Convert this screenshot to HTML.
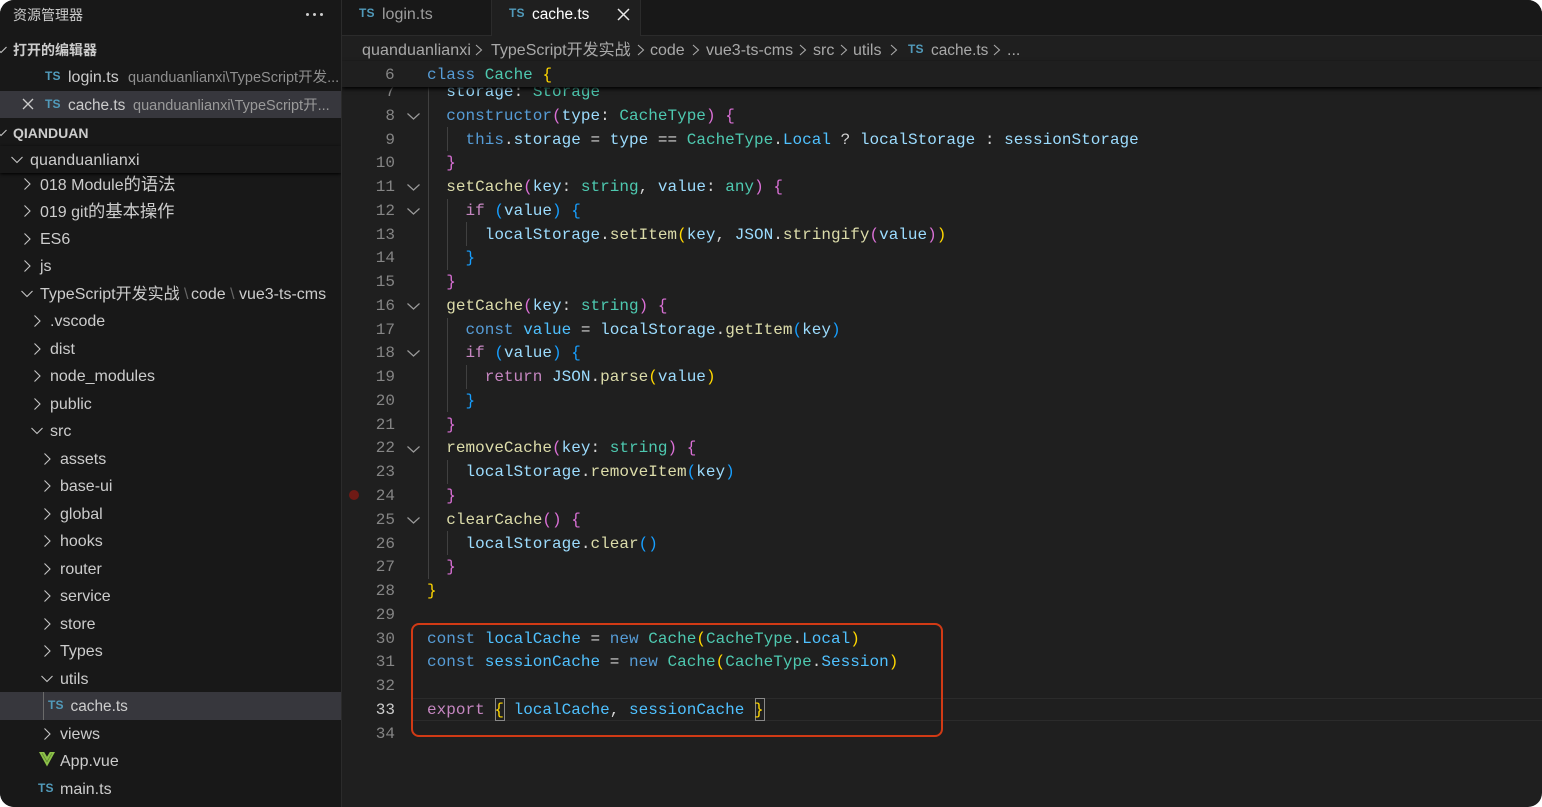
<!DOCTYPE html>
<html><head><meta charset="utf-8"><style>
*{box-sizing:border-box}
html,body{margin:0;padding:0;width:1542px;height:807px;overflow:hidden;background:#fff}
#w{position:absolute;left:0;top:0;width:1542px;height:807px;background:#1f1f1f;border-radius:14px;overflow:hidden;font-family:"Liberation Sans","Noto Sans CJK SC",sans-serif;color:#ccc}
.a{position:absolute;white-space:pre}
#side{position:absolute;left:0;top:0;width:341px;height:807px;background:#181818;overflow:hidden;font-size:16px}
#side .a{line-height:20px}
#tree{position:absolute;left:0;top:169.5px;width:341px}
.r{position:relative;height:27.5px;line-height:27.5px;white-space:pre}
.r span.t{position:absolute;top:1px}
.z{font-size:17.3px}
svg.c{position:absolute;width:12px;height:12px;fill:none;stroke:#c5c5c5;stroke-width:1.1}
.ts{position:absolute;font-weight:bold;font-size:12px;color:#519aba;line-height:14px;letter-spacing:.2px}
#tabs{position:absolute;left:342px;top:0;width:1200px;height:36px;background:#181818;border-bottom:1px solid #2b2b2b}
#gut,#code{position:absolute;font-family:"Liberation Mono",monospace;font-size:16px;line-height:23.76px;white-space:pre}
#gut{left:342px;top:81px;width:53px;text-align:right;color:#858585;letter-spacing:.015px}
#code{left:427px;top:81px;letter-spacing:.015px;color:#ccc}
.k{color:#569cd6}.n{color:#4ec9b0}.v{color:#9cdcfe}.f{color:#dcdcaa}.g{color:#ffd700}.p{color:#da70d6}.b{color:#179fff}.x{color:#c586c0}.o{color:#d4d4d4}.q{color:#4fc1ff}
.i{position:absolute;width:1px;background:#404040}
svg.fd{position:absolute;left:407px;width:13px;height:12px;fill:none;stroke:#9a9a9a;stroke-width:1.2}
</style></head><body><div id="w">

<div id="tabs"></div>
<div class="a" style="left:342px;top:0;width:150px;height:35px;background:#181818"></div>
<div class="a" style="left:491px;top:0;width:1px;height:36px;background:#2b2b2b"></div>
<div class="a" style="left:492px;top:0;width:149px;height:36px;background:#1f1f1f;border-right:1px solid #2b2b2b"></div>
<span class="ts" style="left:359px;top:6px">TS</span>
<span class="a" style="left:382px;top:5px;font-size:16px;line-height:20px;color:#9d9d9d">login.ts</span>
<span class="ts" style="left:509px;top:6px">TS</span>
<span class="a" style="left:532px;top:5px;font-size:15.4px;line-height:20px;color:#fff">cache.ts</span>
<svg class="a" style="left:617px;top:8px" width="13" height="13" fill="none" stroke="#e8e8e8" stroke-width="1.5"><path d="M1 1L12 12M12 1L1 12"/></svg>

<!-- breadcrumb -->
<div style="position:absolute;left:342px;top:41px;height:20px;font-size:16px;line-height:20px;color:#a9a9a9">
<span class="a" style="left:20px;letter-spacing:.1px">quanduanlianxi</span>
<svg class="a" style="left:133px;top:3px" width="8" height="12" fill="none" stroke="#a9a9a9" stroke-width="1.1"><path d="M1 1L6.5 6L1 11"/></svg>
<span class="a" style="left:149px">TypeScript开发实战</span>
<svg class="a" style="left:295px;top:3px" width="8" height="12" fill="none" stroke="#a9a9a9" stroke-width="1.1"><path d="M1 1L6.5 6L1 11"/></svg>
<span class="a" style="left:308px">code</span>
<svg class="a" style="left:350px;top:3px" width="8" height="12" fill="none" stroke="#a9a9a9" stroke-width="1.1"><path d="M1 1L6.5 6L1 11"/></svg>
<span class="a" style="left:364px">vue3-ts-cms</span>
<svg class="a" style="left:457px;top:3px" width="8" height="12" fill="none" stroke="#a9a9a9" stroke-width="1.1"><path d="M1 1L6.5 6L1 11"/></svg>
<span class="a" style="left:471px">src</span>
<svg class="a" style="left:498px;top:3px" width="8" height="12" fill="none" stroke="#a9a9a9" stroke-width="1.1"><path d="M1 1L6.5 6L1 11"/></svg>
<span class="a" style="left:511px">utils</span>
<svg class="a" style="left:548px;top:3px" width="8" height="12" fill="none" stroke="#a9a9a9" stroke-width="1.1"><path d="M1 1L6.5 6L1 11"/></svg>
<span class="ts" style="left:566px;top:1px">TS</span>
<span class="a" style="left:589px;font-size:15.4px">cache.ts</span>
<svg class="a" style="left:651px;top:3px" width="8" height="12" fill="none" stroke="#a9a9a9" stroke-width="1.1"><path d="M1 1L6.5 6L1 11"/></svg>
<span class="a" style="left:665px">...</span>
</div>

<!-- editor -->
<div class="a" style="left:413px;top:698px;width:1129px;height:23px;border-top:1px solid #2b2b2b;border-bottom:1px solid #2b2b2b"></div>
<div class="i" style="left:428px;top:87px;height:492px"></div>
<div class="i" style="left:447px;top:127px;height:24px"></div>
<div class="i" style="left:447px;top:199px;height:71px"></div>
<div class="i" style="left:447px;top:318px;height:94px"></div>
<div class="i" style="left:447px;top:460px;height:24px"></div>
<div class="i" style="left:447px;top:531px;height:24px"></div>
<div class="i" style="left:466px;top:222px;height:24px"></div>
<div class="i" style="left:466px;top:365px;height:24px"></div>
<div class="a" style="left:495px;top:698px;width:10px;height:23px;border:1px solid #888"></div>
<div class="a" style="left:755px;top:698px;width:10px;height:23px;border:1px solid #888"></div>

<div id="gut">7
8
9
10
11
12
13
14
15
16
17
18
19
20
21
22
23
24
25
26
27
28
29
30
31
32
<span style="color:#ccc">33</span>
34</div>

<div id="code">  <span class="v">storage</span><span class="o">:</span> <span class="n">Storage</span>
  <span class="k">constructor</span><span class="p">(</span><span class="v">type</span><span class="o">:</span> <span class="n">CacheType</span><span class="p">)</span> <span class="p">{</span>
    <span class="k">this</span><span class="o">.</span><span class="v">storage</span> <span class="o">=</span> <span class="v">type</span> <span class="o">==</span> <span class="n">CacheType</span><span class="o">.</span><span class="q">Local</span> <span class="o">?</span> <span class="v">localStorage</span> <span class="o">:</span> <span class="v">sessionStorage</span>
  <span class="p">}</span>
  <span class="f">setCache</span><span class="p">(</span><span class="v">key</span><span class="o">:</span> <span class="n">string</span><span class="o">,</span> <span class="v">value</span><span class="o">:</span> <span class="n">any</span><span class="p">)</span> <span class="p">{</span>
    <span class="x">if</span> <span class="b">(</span><span class="v">value</span><span class="b">)</span> <span class="b">{</span>
      <span class="v">localStorage</span><span class="o">.</span><span class="f">setItem</span><span class="g">(</span><span class="v">key</span><span class="o">,</span> <span class="v">JSON</span><span class="o">.</span><span class="f">stringify</span><span class="p">(</span><span class="v">value</span><span class="p">)</span><span class="g">)</span>
    <span class="b">}</span>
  <span class="p">}</span>
  <span class="f">getCache</span><span class="p">(</span><span class="v">key</span><span class="o">:</span> <span class="n">string</span><span class="p">)</span> <span class="p">{</span>
    <span class="k">const</span> <span class="q">value</span> <span class="o">=</span> <span class="v">localStorage</span><span class="o">.</span><span class="f">getItem</span><span class="b">(</span><span class="v">key</span><span class="b">)</span>
    <span class="x">if</span> <span class="b">(</span><span class="v">value</span><span class="b">)</span> <span class="b">{</span>
      <span class="x">return</span> <span class="v">JSON</span><span class="o">.</span><span class="f">parse</span><span class="g">(</span><span class="v">value</span><span class="g">)</span>
    <span class="b">}</span>
  <span class="p">}</span>
  <span class="f">removeCache</span><span class="p">(</span><span class="v">key</span><span class="o">:</span> <span class="n">string</span><span class="p">)</span> <span class="p">{</span>
    <span class="v">localStorage</span><span class="o">.</span><span class="f">removeItem</span><span class="b">(</span><span class="v">key</span><span class="b">)</span>
  <span class="p">}</span>
  <span class="f">clearCache</span><span class="p">()</span> <span class="p">{</span>
    <span class="v">localStorage</span><span class="o">.</span><span class="f">clear</span><span class="b">()</span>
  <span class="p">}</span>
<span class="g">}</span>

<span class="k">const</span> <span class="q">localCache</span> <span class="o">=</span> <span class="k">new</span> <span class="n">Cache</span><span class="g">(</span><span class="n">CacheType</span><span class="o">.</span><span class="q">Local</span><span class="g">)</span>
<span class="k">const</span> <span class="q">sessionCache</span> <span class="o">=</span> <span class="k">new</span> <span class="n">Cache</span><span class="g">(</span><span class="n">CacheType</span><span class="o">.</span><span class="q">Session</span><span class="g">)</span>

<span class="x">export</span> <span class="g">{</span> <span class="q">localCache</span><span class="o">,</span> <span class="q">sessionCache</span> <span class="g">}</span>
</div>

<svg class="fd" style="top:110px"><path d="M.5 3.5L6.5 9L12.5 3.5"/></svg>
<svg class="fd" style="top:181px"><path d="M.5 3.5L6.5 9L12.5 3.5"/></svg>
<svg class="fd" style="top:205px"><path d="M.5 3.5L6.5 9L12.5 3.5"/></svg>
<svg class="fd" style="top:300px"><path d="M.5 3.5L6.5 9L12.5 3.5"/></svg>
<svg class="fd" style="top:347px"><path d="M.5 3.5L6.5 9L12.5 3.5"/></svg>
<svg class="fd" style="top:443px"><path d="M.5 3.5L6.5 9L12.5 3.5"/></svg>
<svg class="fd" style="top:514px"><path d="M.5 3.5L6.5 9L12.5 3.5"/></svg>
<div class="a" style="left:349px;top:490px;width:10px;height:10px;border-radius:50%;background:#6f1a15"></div>

<!-- sticky scroll -->
<div class="a" style="left:342px;top:61px;width:1200px;height:26px;background:#1f1f1f;box-shadow:0 2px 4px #000;font-family:'Liberation Mono',monospace;font-size:16px;line-height:27px;letter-spacing:.015px"><span class="a" style="left:43px;color:#858585;top:.5px">6</span><span class="a" style="left:85px;top:.5px"><span class="k">class</span> <span class="n">Cache</span> <span class="g">{</span></span></div>

<!-- red box -->
<div class="a" style="left:411px;top:623px;width:532px;height:114px;border:2px solid #d13a15;border-radius:8px"></div>

<!-- sidebar -->
<div id="side">
<div class="a" style="left:13px;top:5px;font-size:14px">资源管理器</div>
<div class="a" style="left:306px;top:12.5px;width:3px;height:3px;background:#ccc;border-radius:50%"></div>
<div class="a" style="left:313px;top:12.5px;width:3px;height:3px;background:#ccc;border-radius:50%"></div>
<div class="a" style="left:320px;top:12.5px;width:3px;height:3px;background:#ccc;border-radius:50%"></div>

<svg class="c" style="left:-5px;top:44px"><path d="M.5 3L6 8.5L11.5 3"/></svg>
<div class="a" style="left:13px;top:40px;font-size:14px;font-weight:bold">打开的编辑器</div>
<span class="ts" style="left:45px;top:69px">TS</span>
<div class="a" style="left:68px;top:68px">login.ts</div>
<div class="a" style="left:128px;top:68px;font-size:14.5px;color:#8f8f8f">quanduanlianxi\TypeScript开发...</div>

<div class="a" style="left:0;top:91px;width:341px;height:27px;background:#37373d"></div>
<svg class="a" style="left:22px;top:98px" width="12" height="12" fill="none" stroke="#ccc" stroke-width="1.3"><path d="M1 1L11 11M11 1L1 11"/></svg>
<span class="ts" style="left:45px;top:97px">TS</span>
<div class="a" style="left:68px;top:96px;font-size:15.4px">cache.ts</div>
<div class="a" style="left:133px;top:96px;font-size:14.5px;color:#9a9a9a">quanduanlianxi\TypeScript开...</div>

<svg class="c" style="left:-5px;top:127px"><path d="M.5 3L6 8.5L11.5 3"/></svg>
<div class="a" style="left:13px;top:123px;font-size:14px;font-weight:bold">QIANDUAN</div>

<div id="tree">
<div class="r"><svg class="c" style="left:22px;top:8px"><path d="M2.5 .5L8 6L2.5 11.5"/></svg><span class="t" style="left:40px">018 Module<span class="z">的语法</span></span></div>
<div class="r"><svg class="c" style="left:22px;top:8px"><path d="M2.5 .5L8 6L2.5 11.5"/></svg><span class="t" style="left:40px">019 git<span class="z">的基本操作</span></span></div>
<div class="r"><svg class="c" style="left:22px;top:8px"><path d="M2.5 .5L8 6L2.5 11.5"/></svg><span class="t" style="left:40px">ES6</span></div>
<div class="r"><svg class="c" style="left:22px;top:8px"><path d="M2.5 .5L8 6L2.5 11.5"/></svg><span class="t" style="left:40px">js</span></div>
<div class="r"><svg class="c" style="left:21px;top:8px"><path d="M.5 3L6 8.5L11.5 3"/></svg><span class="t" style="left:40px">TypeScript开发实战<span style="color:#666"> \ </span><span style="margin-left:-2px">code</span><span style="color:#666"> \ </span>vue3-ts-cms</span></div>
<div class="r"><svg class="c" style="left:32px;top:8px"><path d="M2.5 .5L8 6L2.5 11.5"/></svg><span class="t" style="left:50px">.vscode</span></div>
<div class="r"><svg class="c" style="left:32px;top:8px"><path d="M2.5 .5L8 6L2.5 11.5"/></svg><span class="t" style="left:50px">dist</span></div>
<div class="r"><svg class="c" style="left:32px;top:8px"><path d="M2.5 .5L8 6L2.5 11.5"/></svg><span class="t" style="left:50px">node_modules</span></div>
<div class="r"><svg class="c" style="left:32px;top:8px"><path d="M2.5 .5L8 6L2.5 11.5"/></svg><span class="t" style="left:50px">public</span></div>
<div class="r"><svg class="c" style="left:31px;top:8px"><path d="M.5 3L6 8.5L11.5 3"/></svg><span class="t" style="left:50px">src</span></div>
<div class="r"><svg class="c" style="left:42px;top:8px"><path d="M2.5 .5L8 6L2.5 11.5"/></svg><span class="t" style="left:60px">assets</span></div>
<div class="r"><svg class="c" style="left:42px;top:8px"><path d="M2.5 .5L8 6L2.5 11.5"/></svg><span class="t" style="left:60px">base-ui</span></div>
<div class="r"><svg class="c" style="left:42px;top:8px"><path d="M2.5 .5L8 6L2.5 11.5"/></svg><span class="t" style="left:60px">global</span></div>
<div class="r"><svg class="c" style="left:42px;top:8px"><path d="M2.5 .5L8 6L2.5 11.5"/></svg><span class="t" style="left:60px">hooks</span></div>
<div class="r"><svg class="c" style="left:42px;top:8px"><path d="M2.5 .5L8 6L2.5 11.5"/></svg><span class="t" style="left:60px">router</span></div>
<div class="r"><svg class="c" style="left:42px;top:8px"><path d="M2.5 .5L8 6L2.5 11.5"/></svg><span class="t" style="left:60px">service</span></div>
<div class="r"><svg class="c" style="left:42px;top:8px"><path d="M2.5 .5L8 6L2.5 11.5"/></svg><span class="t" style="left:60px">store</span></div>
<div class="r"><svg class="c" style="left:42px;top:8px"><path d="M2.5 .5L8 6L2.5 11.5"/></svg><span class="t" style="left:60px">Types</span></div>
<div class="r"><svg class="c" style="left:41px;top:8px"><path d="M.5 3L6 8.5L11.5 3"/></svg><span class="t" style="left:60px">utils</span></div>
<div class="r" style="background:#37373d"><div style="position:absolute;left:43px;top:0;width:1px;height:27.5px;background:#6a6a6a"></div><span class="ts" style="left:48px;top:6px">TS</span><span class="t" style="left:70.5px;font-size:15.4px">cache.ts</span></div>
<div class="r"><svg class="c" style="left:42px;top:8px"><path d="M2.5 .5L8 6L2.5 11.5"/></svg><span class="t" style="left:60px">views</span></div>
<div class="r"><svg style="position:absolute;left:39px;top:5px" width="16" height="15"><path d="M0 0H5.2L8 4.8L10.8 0H16L8 14.5Z" fill="#8dc149"/><path d="M3.2 1.5L8 9.8L12.8 1.5" fill="none" stroke="#5f8a30" stroke-width=".8"/></svg><span class="t" style="left:60px">App.vue</span></div>
<div class="r"><span class="ts" style="left:38px;top:6px">TS</span><span class="t" style="left:60px">main.ts</span></div>
</div>

<div class="a" style="left:0;top:146px;width:341px;height:27px;background:#181818;box-shadow:0 1px 3px #000"></div>
<svg class="c" style="left:11px;top:154px"><path d="M.5 3L6 8.5L11.5 3"/></svg>
<div class="a" style="left:30px;top:150.5px;font-size:16px;letter-spacing:.15px">quanduanlianxi</div>
</div>
<div class="a" style="left:341px;top:0;width:1px;height:807px;background:#2b2b2b"></div>
</div></body></html>
